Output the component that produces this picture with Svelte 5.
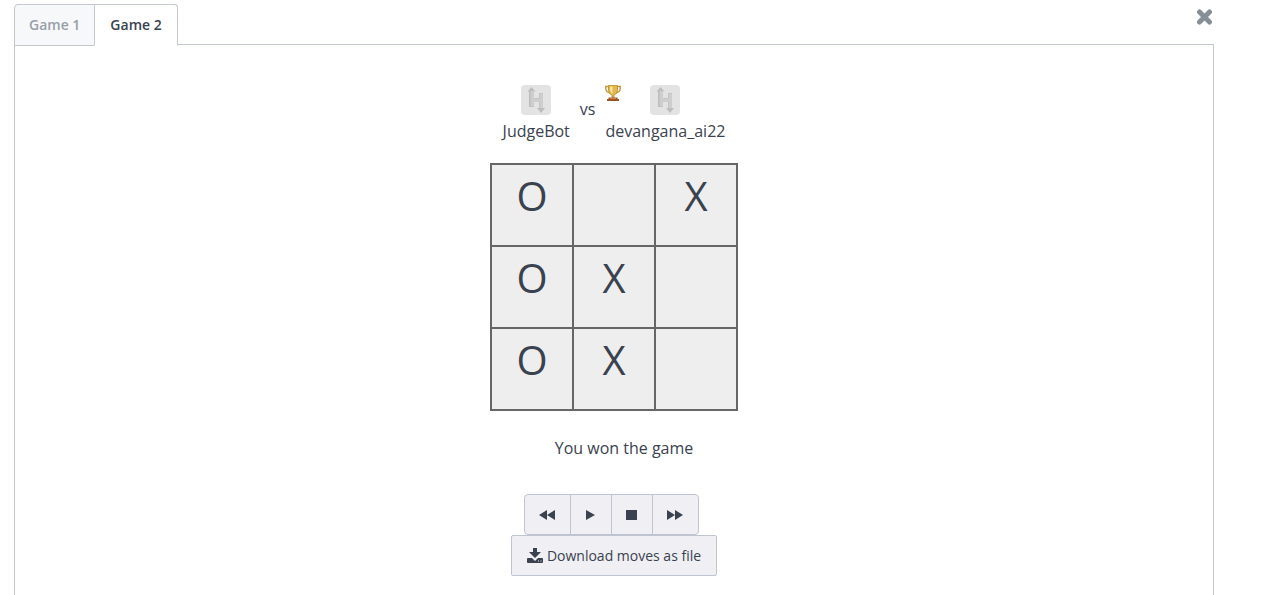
<script>
  let active = $state(2);
  const tabs = [1, 2];
  const board = [
    ['O', '', 'X'],
    ['O', 'X', ''],
    ['O', 'X', '']
  ];
  const controls = [
    { label: 'Rewind', wide: true, size: 16, path: 'M16 2v10L8 7zM8 2v10L0 7z' },
    { label: 'Play', wide: false, size: 9, path: 'M0 2l9 5-9 5z' },
    { label: 'Stop', wide: false, size: 11, path: 'M0 2h11v10H0z' },
    { label: 'Fast forward', wide: true, size: 16, path: 'M0 2l8 5-8 5zM8 2l8 5-8 5z' }
  ];
</script>

{#snippet avatar()}
  <svg class="avatar" viewBox="0 0 30 30" aria-hidden="true">
    <rect width="30" height="30" rx="4" fill="#e3e3e3" />
    <path fill="#bdbdbd" d="M10.500 2l4 4.500H13V13h5V8h4v15h2l-4 5-4-5h2v-6h-5v5H8V6.500H6.500z" />
    <path fill="#cecece" d="M9.500 6H13v7.500h5.500V8.500H22V23h-3.500v-6H13v4.500H9.500z" />
  </svg>
{/snippet}

<div class="page">
  <header>
    <div class="tabs" role="tablist">
      {#each tabs as n}
        <button class="tab" class:active={active === n} role="tab" aria-selected={active === n} onclick={() => (active = n)}>Game {n}</button>
      {/each}
    </div>
    <button class="close" aria-label="Close">
      <svg width="18" height="18" viewBox="0 0 18 18"><path d="M3.500 4l10 10M13.500 4l-10 10" stroke="#878f96" stroke-width="5" stroke-linecap="round" /></svg>
    </button>
  </header>

  <main>
    <div class="players">
      <div class="player">{@render avatar()}<span>JudgeBot</span></div>
      <span class="vs">vs</span>
      <div class="player">
        <svg class="trophy" width="16" height="16" viewBox="0 0 16 16" aria-hidden="true">
          <path d="M4 1.500H.8V4q.4 3.500 5 4M12 1.500h3.200V4q-.4 3.500-5 4" fill="none" stroke="#c4943a" stroke-width="1.400" />
          <path d="M3.500.5h9v4.500q0 4-3.500 5v2.500H7V10Q3.500 9 3.500 5z" fill="#e3b84e" stroke="#b98a2c" stroke-width=".8" />
          <path d="M5 1.500h2.500V9Q5 7 5 4z" fill="#f9e6a0" />
          <path d="M3.500 12.500h9V14H14v2H2v-2h1.500z" fill="#9c5427" />
          <path d="M5 13h6v1H5z" fill="#cf8548" />
        </svg>
        {@render avatar()}<span>devangana_ai22</span>
      </div>
    </div>

    <table aria-label="Board">
      <tbody>
        {#each board as row}
          <tr>{#each row as cell}<td>{cell}</td>{/each}</tr>
        {/each}
      </tbody>
    </table>

    <p>You won the game</p>

    <div class="controls">
      {#each controls as c}
        <button class:wide={c.wide} aria-label={c.label}>
          <svg width={c.size} height="14" viewBox="0 0 {c.size} 14"><path d={c.path} fill="#39424e" /></svg>
        </button>
      {/each}
    </div>
    <button class="download">
      <svg width="16" height="16" viewBox="0 0 16 16" aria-hidden="true">
        <path fill="#39424e" fill-rule="evenodd" d="M6 0h4v4h4L8 10 2 4h4zM1 10h4l3 3 3-3h4q1 0 1 1v3q0 1-1 1H1q-1 0-1-1v-3q0-1 1-1zM11 12.500v1h1v-1zM13.500 12.500v1h1v-1z" />
      </svg>
      Download moves as file
    </button>
  </main>
</div>

<style>
  :global(body) {
    background: #fff;
  }
  .page {
    margin: 0 48px 0 14px;
    padding-top: 4px;
    font: 16px/22px "Open Sans", sans-serif;
    color: #39424e;
  }
  button {
    font: inherit;
    color: inherit;
    cursor: pointer;
  }
  svg {
    display: block;
    flex: none;
  }
  header {
    display: flex;
    justify-content: space-between;
    align-items: flex-start;
  }
  .tabs {
    display: flex;
    position: relative;
    margin-bottom: -2px;
  }
  .tab {
    box-sizing: border-box;
    height: 42px;
    padding: 0 14px;
    font-size: 14px;
    font-weight: 600;
    color: #989fa8;
    background: #f7f8fa;
    border: 1px solid #c2c7d0;
    border-radius: 4px 0 0 0;
  }
  .tab + .tab {
    margin-left: -1px;
    padding: 0 15px;
    border-radius: 0 4px 0 0;
  }
  .tab.active {
    color: #39424e;
    background: #fff;
    border-bottom-color: #fff;
  }
  .close {
    padding: 4px 0;
    border: 0;
    background: none;
  }
  main {
    box-sizing: border-box;
    display: flex;
    flex-direction: column;
    align-items: center;
    padding: 40px 0 48px;
    border: 1px solid #c2c7d0;
    border-bottom: 0;
  }
  .players {
    display: flex;
    gap: 10px;
  }
  .player {
    position: relative;
    display: flex;
    flex-direction: column;
    align-items: center;
    gap: 5px;
  }
  .avatar {
    width: 30px;
    height: 30px;
  }
  .trophy {
    position: absolute;
    top: 0;
    left: 0;
  }
  .vs {
    padding-top: 13px;
  }
  table {
    margin-top: 21px;
    border-collapse: collapse;
  }
  td {
    box-sizing: border-box;
    width: 82px;
    height: 82px;
    padding: 0 0 18px;
    border: 2px solid #666;
    background: #eee;
    font-size: 40px;
    line-height: 60px;
    text-align: center;
  }
  p {
    margin: 26px 0 35px;
    padding-left: 20px;
  }
  .controls {
    display: flex;
    margin-right: 6px;
  }
  .controls button {
    box-sizing: border-box;
    display: flex;
    align-items: center;
    justify-content: center;
    width: 42px;
    height: 41px;
    padding: 0;
    background: #f0eff4;
    border: 1px solid #bfc5d0;
  }
  .controls .wide {
    width: 47px;
  }
  .controls button + button {
    margin-left: -1px;
  }
  .controls button:first-child {
    border-radius: 4px 0 0 4px;
  }
  .controls button:last-child {
    border-radius: 0 4px 4px 0;
  }
  .download {
    box-sizing: border-box;
    display: flex;
    align-items: center;
    gap: 4px;
    height: 41px;
    padding: 0 15px;
    font-size: 14px;
    background: #f0eff4;
    border: 1px solid #bfc5d0;
    border-radius: 2px;
  }
</style>
